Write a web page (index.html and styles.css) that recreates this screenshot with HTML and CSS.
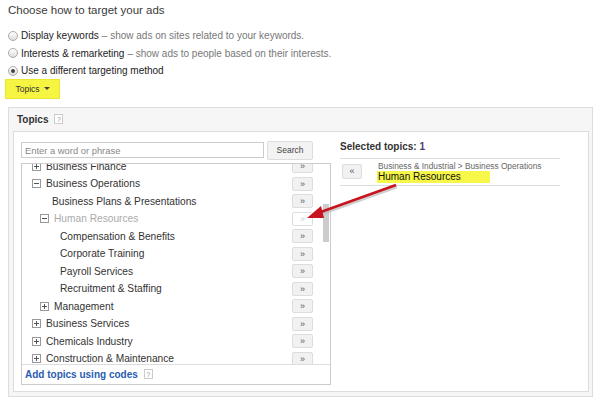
FILE: index.html
```html
<!DOCTYPE html>
<html lang="en">
  <head>
    <meta charset="UTF-8" />
    <meta name="viewport" content="width=device-width, initial-scale=1.0" />
    <title>Choose how to target your ads</title>
    <link rel="stylesheet" href="styles.css">
  </head>
  <body>
    <h1>Choose how to target your ads</h1>

    <div class="options">
      <label class="option">
        <span class="radio"></span>
        <span class="opt-name">Display keywords</span>
        <span class="opt-desc">&ndash; show ads on sites related to your keywords.</span>
      </label>
      <label class="option">
        <span class="radio"></span>
        <span class="opt-name">Interests &amp; remarketing</span>
        <span class="opt-desc">&ndash; show ads to people based on their interests.</span>
      </label>
      <label class="option">
        <span class="radio checked"></span>
        <span class="opt-name">Use a different targeting method</span>
      </label>
    </div>

    <div class="method-btn">Topics <span class="caret"></span></div>

    <div class="panel">
      <div class="panel-head">Topics <span class="help">?</span></div>

      <div class="panel-body">
        <div class="picker">
          <div class="search-row">
            <input class="search-input" type="text" placeholder="Enter a word or phrase">
            <button class="search-btn">Search</button>
          </div>

          <div class="tree-box">
            <div class="tree-view">
              <div class="tree" id="tree"></div>
              <div class="scrollbar"><div class="thumb"></div></div>
            </div>
            <div class="tree-foot">
              <a class="codes-link">Add topics using codes</a>
              <span class="help">?</span>
            </div>
          </div>
        </div>

        <div class="selected">
          <div class="selected-title">Selected topics: <span class="count">1</span></div>
          <div class="selected-item">
            <button class="small-btn">&laquo;</button>
            <div class="selected-text">
              <div class="crumb">Business &amp; Industrial &gt; Business Operations</div>
              <div class="topic-name"><span class="mark">Human Resources</span></div>
            </div>
          </div>
        </div>
      </div>
    </div>

    <svg class="arrow" width="599" height="405" viewBox="0 0 599 405">
      <g transform="translate(1,2)" stroke="#bbb" fill="#bbb" opacity="0.7">
        <line x1="396" y1="185" x2="318" y2="213" stroke-width="2.5" />
      </g>
      <line x1="396" y1="185" x2="318" y2="213" stroke="#c8141e" stroke-width="2.5" />
      <polygon points="307,218 321,206 324,218" fill="#c8141e" />
    </svg>

    <script>
      // rows of the topic tree: [label, level, toggle]
      const rows = [
        ["Business Finance", 0, "plus"],
        ["Business Operations", 0, "minus"],
        ["Business Plans & Presentations", 1, ""],
        ["Human Resources", 1, "minus", true],
        ["Compensation & Benefits", 2, ""],
        ["Corporate Training", 2, ""],
        ["Payroll Services", 2, ""],
        ["Recruitment & Staffing", 2, ""],
        ["Management", 1, "plus"],
        ["Business Services", 0, "plus"],
        ["Chemicals Industry", 0, "plus"],
        ["Construction & Maintenance", 0, "plus"]
      ];

      const tree = document.getElementById("tree");

      rows.forEach(([label, level, toggle, added]) => {
        const row = document.createElement("div");
        row.className = "tree-row lv" + level + (toggle ? "" : " leaf");
        if (added) row.classList.add("added");

        const name = document.createElement("div");
        name.className = "tree-label";
        if (toggle) {
          const box = document.createElement("span");
          box.className = "toggle " + toggle;
          name.appendChild(box);
        }
        name.appendChild(document.createTextNode(label));

        const btn = document.createElement("button");
        btn.className = "small-btn";
        btn.innerHTML = "&raquo;";

        row.appendChild(name);
        row.appendChild(btn);
        tree.appendChild(row);
      });
    </script>
  </body>
</html>
```

FILE: styles.css
```css
body {
  font-family: "Liberation Sans", Arial, sans-serif;
  margin: 0;
  padding: 0 7px 0 8px;
  background-color: #fff;
  color: #333;
  position: relative;
  width: 584px;
}

h1 {
  margin: 2px 0 0;
  font-size: 11.5px;
  font-weight: normal;
  line-height: 17px;
  color: #3a3a3a;
}

.options {
  margin-top: 8px;
}

.option {
  display: flex;
  align-items: center;
  height: 17.5px;
  font-size: 10px;
  white-space: nowrap;
}

.radio {
  width: 8px;
  height: 8px;
  border: 1px solid #aaa;
  border-radius: 50%;
  background: linear-gradient(#fff, #ddd);
  margin-right: 3px;
  position: relative;
}

.radio.checked::after {
  content: "";
  position: absolute;
  left: 2px;
  top: 2px;
  width: 4px;
  height: 4px;
  border-radius: 50%;
  background-color: #444;
}

.opt-name {
  color: #222;
  margin-right: 3px;
}

.opt-desc {
  color: #777;
}

.method-btn {
  margin: -1px 0 0 -3px;
  width: 55px;
  height: 20px;
  box-sizing: border-box;
  background-color: #f6f542;
  border: 1px solid #e8e630;
  font-size: 8.5px;
  color: #333;
  display: flex;
  align-items: center;
  justify-content: center;
  gap: 4px;
}

.caret {
  width: 0;
  height: 0;
  border-left: 3px solid transparent;
  border-right: 3px solid transparent;
  border-top: 3px solid #444;
}

.panel {
  margin-top: 8px;
  width: 585px;
  height: 290px;
  box-sizing: border-box;
  border: 1px solid #ddd;
  background-color: #f6f6f6;
  padding: 0 3px 4px 4px;
  display: flex;
  flex-direction: column;
}

.panel-head {
  height: 23px;
  padding-left: 4px;
  display: flex;
  align-items: center;
  gap: 6px;
  font-size: 10px;
  font-weight: bold;
  color: #333;
}

.help {
  display: inline-flex;
  align-items: center;
  justify-content: center;
  width: 7px;
  height: 8px;
  border: 1px solid #ccc;
  background-color: #fff;
  font-size: 7px;
  font-weight: normal;
  color: #999;
}

.panel-body {
  flex: 1;
  background-color: #fff;
  border: 1px solid #ddd;
  padding: 9px 0 0 7px;
  display: flex;
  gap: 9px;
}

.picker {
  width: 310px;
  display: flex;
  flex-direction: column;
}

.search-row {
  display: flex;
  align-items: center;
  height: 19px;
}

.search-input {
  width: 243px;
  height: 16px;
  box-sizing: border-box;
  border: 1px solid #ccc;
  padding: 0 3px;
  font-family: inherit;
  font-size: 9.4px;
  color: #333;
  margin: 0;
}

.search-input::placeholder {
  color: #888;
}

.search-btn {
  margin-left: 3px;
  width: 46px;
  height: 19px;
  border: 1px solid #ddd;
  border-radius: 2px;
  background-color: #f3f3f3;
  font-family: inherit;
  font-size: 8.5px;
  color: #444;
  padding: 0;
}

.tree-box {
  margin-top: 3px;
  height: 222px;
  box-sizing: border-box;
  border: 1px solid #ccc;
  display: flex;
  flex-direction: column;
}

.tree-view {
  height: 200px;
  display: flex;
  overflow: hidden;
  border-bottom: 1px solid #ddd;
}

.tree {
  flex: 1;
  margin-top: -6px;
}

.tree-row {
  height: 17.5px;
  display: flex;
  align-items: center;
  padding-right: 8px;
  font-size: 10.2px;
  color: #333;
  white-space: nowrap;
}

.tree-label {
  flex: 1;
  display: flex;
  align-items: center;
}

.lv0 { padding-left: 10px; }
.lv1 { padding-left: 18px; }
.lv1.leaf { padding-left: 30px; }
.lv2.leaf { padding-left: 38px; }

.toggle {
  width: 7px;
  height: 7px;
  border: 1px solid #999;
  margin-right: 5px;
  position: relative;
}

.toggle::before {
  content: "";
  position: absolute;
  left: 1px;
  top: 3px;
  width: 5px;
  height: 1px;
  background-color: #555;
}

.toggle.plus::after {
  content: "";
  position: absolute;
  left: 3px;
  top: 1px;
  width: 1px;
  height: 5px;
  background-color: #555;
}

.tree-row.added .tree-label {
  color: #aaa;
}

.small-btn {
  width: 21px;
  height: 14px;
  padding: 0;
  border: 1px solid #ddd;
  border-radius: 2px;
  background-color: #f1f1f1;
  font-family: inherit;
  font-size: 9px;
  line-height: 10px;
  color: #556;
}

.tree-row.added .small-btn {
  background-color: #fff;
  color: #ccc;
}

.scrollbar {
  width: 9px;
  padding-top: 40px;
  display: flex;
  justify-content: center;
}

.thumb {
  width: 6px;
  height: 38px;
  background-color: #ccc;
}

.tree-foot {
  flex: 1;
  display: flex;
  align-items: center;
  gap: 6px;
  padding-left: 3px;
}

.codes-link {
  font-size: 10px;
  font-weight: bold;
  color: #2a5db0;
}

.selected {
  width: 220px;
}

.selected-title {
  font-size: 10px;
  font-weight: bold;
  color: #333;
  line-height: 12px;
  padding-bottom: 5px;
  border-bottom: 1px solid #ddd;
}

.count {
  color: #4a3a78;
}

.selected-item {
  display: flex;
  gap: 16px;
  padding: 2px 0 2px 2px;
  border-bottom: 1px solid #ddd;
}

.selected-item .small-btn {
  margin-top: 3px;
  width: 20px;
  height: 15px;
}

.crumb {
  font-size: 8.3px;
  color: #666;
  line-height: 10px;
}

.topic-name {
  font-size: 10px;
  color: #111;
  line-height: 12px;
}

.mark {
  display: inline-block;
  width: 112px;
  margin-left: -1px;
  padding-left: 1px;
  background-color: #f7f74a;
}

.arrow {
  position: absolute;
  left: 0;
  top: 0;
  pointer-events: none;
}
```
